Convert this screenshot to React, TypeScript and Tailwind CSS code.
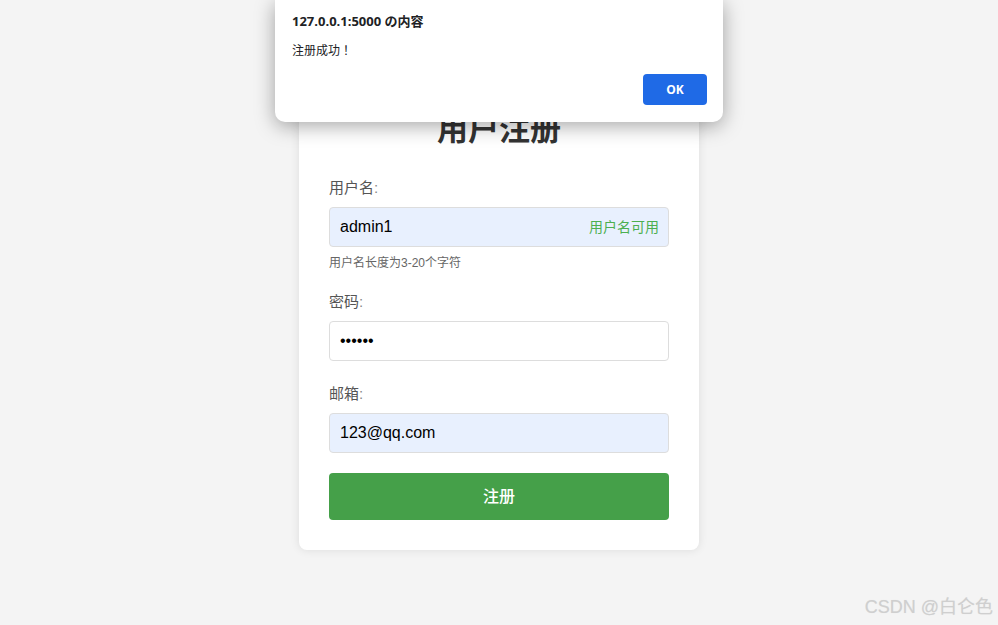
import React from "react";

const cjk = { fontFamily: '"Liberation Sans", "Noto Sans CJK SC", sans-serif' };

export default function App() {
	return (
		<div className="relative min-h-screen w-full overflow-hidden bg-[#f4f4f4]" style={cjk}>
			<main className="flex justify-center pt-[82px]">
				<RegisterCard />
			</main>
			<AlertDialog />
			<div className="absolute bottom-[4px] right-[5px] text-[18px] font-normal text-[#cfcfcf] [text-shadow:0_0_1px_rgba(0,0,0,0.08)]">
				CSDN @白仑色
			</div>
		</div>
	);
}

function RegisterCard() {
	return (
		<div className="w-[400px] rounded-lg bg-white px-[30px] pt-[30px] pb-[30px] shadow-[0_0_10px_rgba(0,0,0,0.1)]">
			<h1 className="mb-[29px] text-center text-[31px] font-bold leading-[36px] text-[#333]">用户注册</h1>

			<Field label="用户名">
				<div className="relative">
					<input
						readOnly
						value="admin1"
						className="h-[40px] w-full rounded border border-[#ddd] bg-[#e8f0fe] px-[10px] text-[16px] text-black outline-none"
					/>
					<span className="absolute right-[10px] top-1/2 -translate-y-1/2 text-[14px] text-[#4caf50]">用户名可用</span>
				</div>
				<p className="mt-[7px] text-[12px] leading-[18px] text-[#666]">用户名长度为3-20个字符</p>
			</Field>

			<Field label="密码" className="mt-[19px]">
				<input
					readOnly
					type="password"
					value="123456"
					className="h-[40px] w-full rounded border border-[#ddd] bg-white px-[10px] text-[16px] text-black outline-none"
				/>
			</Field>

			<Field label="邮箱" className="mt-[22px]">
				<input
					readOnly
					value="123@qq.com"
					className="h-[40px] w-full rounded border border-[#ddd] bg-[#e8f0fe] px-[10px] text-[16px] text-black outline-none"
				/>
			</Field>

			<button className="mt-[20px] h-[47px] w-full rounded bg-[#45a049] text-[16px] font-medium text-white">注册</button>
		</div>
	);
}

function Field(props: { label: string; className?: string; children: React.ReactNode }) {
	return (
		<div className={props.className}>
			<label className="mb-[8px] block text-[15px] leading-[22px] text-[#555]">
				{props.label}
				<span className="text-[#888]">:</span>
			</label>
			{props.children}
		</div>
	);
}

function AlertDialog() {
	return (
		<div
			className="absolute left-[275px] top-0 h-[122px] w-[448px] rounded-b-[10px] bg-white shadow-[0_4px_20px_rgba(0,0,0,0.35)]"
			style={{ fontFamily: '"Open Sans", "Noto Sans CJK JP", sans-serif' }}
		>
			<div className="pl-[17px] pt-[11px] text-[13px] font-bold leading-[20px] text-[#202124]">127.0.0.1:5000 の内容</div>
			<div className="mt-[11px] pl-[17px] text-[12px] leading-[18px] text-[#202124]">注册成功！</div>
			<div className="flex justify-end pr-[16px] pt-[14px]">
				<button className="h-[31px] w-[64px] rounded bg-[#1f6ae6] text-[12px] font-bold text-white">OK</button>
			</div>
		</div>
	);
}
